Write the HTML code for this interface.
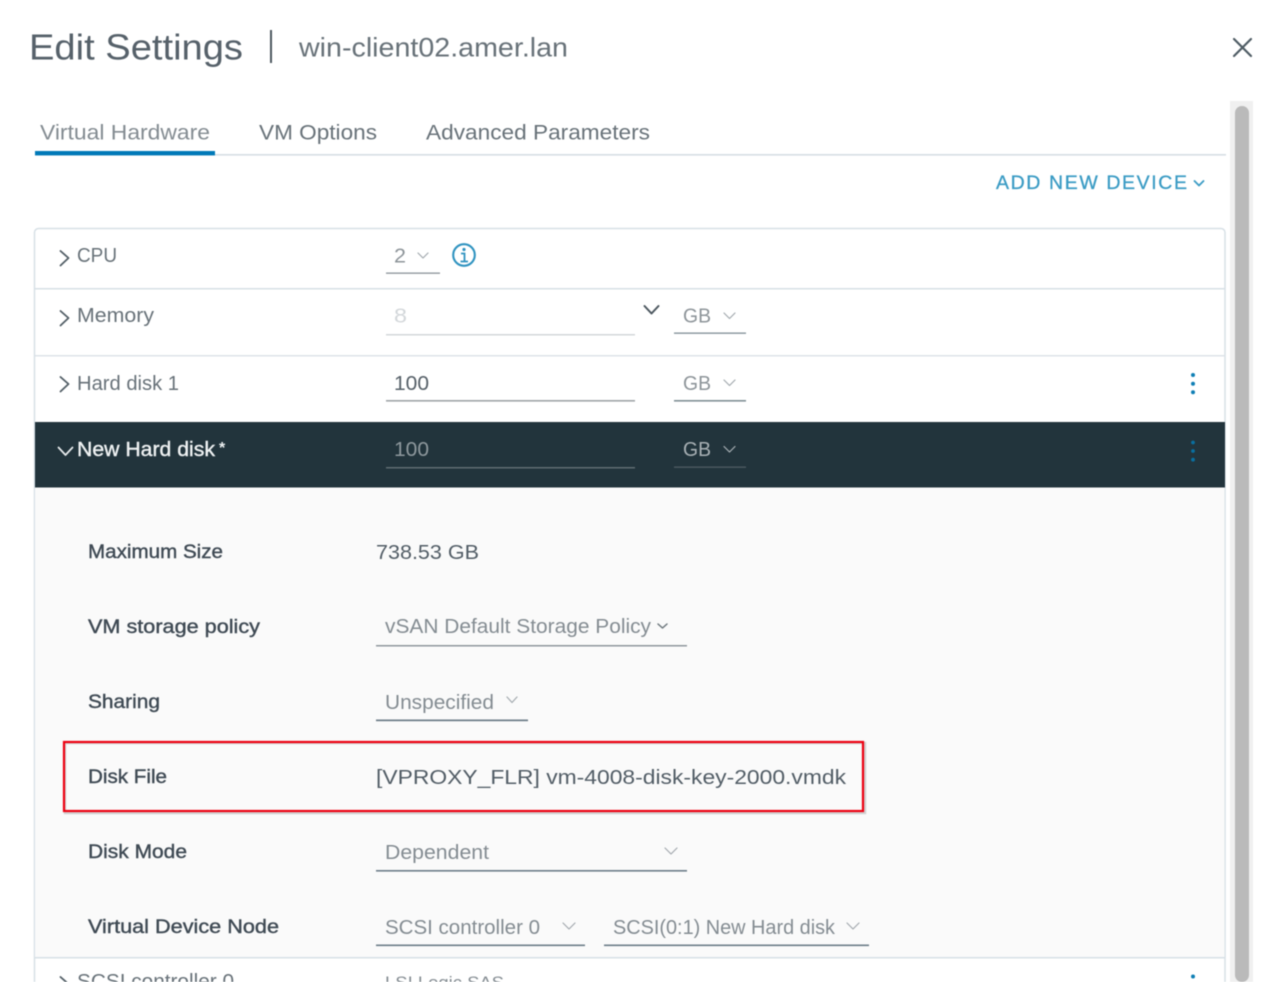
<!DOCTYPE html>
<html>
<head>
<meta charset="utf-8">
<title>Edit Settings</title>
<style>
html,body{margin:0;padding:0;background:#fff;width:1266px;height:982px;overflow:hidden}
svg{display:block;filter:blur(.45px)}
text{font-family:"Liberation Sans",sans-serif;font-size:20px}
.l{fill:#525d66}
.m{fill:#687279}
.g{fill:#848c92}
.b{fill:#3f4a54;font-size:19.5px;stroke:#3f4a54;stroke-width:.4px}
.c{fill:none;stroke-linecap:round;stroke-linejoin:round}
</style>
</head>
<body>
<svg width="1266" height="982" viewBox="0 0 1266 982" xmlns="http://www.w3.org/2000/svg">
<rect width="1266" height="982" fill="#fff"/>

<!-- header -->
<text x="29" y="59.500" style="font-size:36px" fill="#56616a" textLength="214" lengthAdjust="spacingAndGlyphs">Edit Settings</text>
<rect x="270" y="30" width="2" height="33" fill="#4d5860"/>
<text x="299" y="56.500" style="font-size:27px" fill="#687279" textLength="269" lengthAdjust="spacingAndGlyphs">win-client02.amer.lan</text>
<path class="c" d="M1234 39L1251 56M1251 39L1234 56" stroke="#4f5c64" stroke-width="2.200"/>

<!-- scrollbar -->
<rect x="1230" y="101" width="23" height="881" fill="#f0f0f0"/>
<rect x="1235" y="106" width="14" height="876" rx="7" fill="#bababa"/>

<!-- tabs -->
<text x="40" y="139.500" class="g" style="font-size:21.500px" textLength="170" lengthAdjust="spacingAndGlyphs">Virtual Hardware</text>
<text x="259" y="139.500" class="m" style="font-size:21.500px" textLength="118" lengthAdjust="spacingAndGlyphs">VM Options</text>
<text x="426" y="139.500" class="m" style="font-size:21.500px" textLength="224" lengthAdjust="spacingAndGlyphs">Advanced Parameters</text>
<rect x="35" y="154" width="1191" height="1.600" fill="#d6dee3"/>
<rect x="35" y="151" width="180" height="4.400" fill="#0079b8"/>

<text x="996" y="189" style="font-size:19.500px;stroke:#3a9bc4;stroke-width:.3px" fill="#3a9bc4" textLength="191" lengthAdjust="spacing">ADD NEW DEVICE</text>
<path class="c" d="M1194.500 181L1199 185.500L1203.500 181" stroke="#3a9bc4" stroke-width="1.800"/>

<!-- card -->
<path d="M34.500 982V232.500a4 4 0 0 1 4-4H1221a4 4 0 0 1 4 4V982" fill="#fff" stroke="#d7e0e6" stroke-width="1.500"/>
<rect x="35" y="288" width="1190" height="1.500" fill="#d7e0e6"/>
<rect x="35" y="355" width="1190" height="1.500" fill="#dde3e8"/>
<rect x="35" y="488" width="1189.500" height="469" fill="#fafafa"/>
<rect x="35" y="422" width="1190" height="65.500" fill="#22343c"/>
<rect x="35" y="957" width="1190" height="1.500" fill="#d7e0e6"/>

<!-- CPU -->
<path class="c" d="M60.500 251L68.500 258L60.500 265.500" stroke="#525e66" stroke-width="1.800"/>
<text x="77" y="262" class="m" textLength="40" lengthAdjust="spacingAndGlyphs">CPU</text>
<text x="394" y="262.500" fill="#8d9499" textLength="12" lengthAdjust="spacingAndGlyphs">2</text>
<path class="c" d="M418 253L423 258L428 253" stroke="#a3aaaf" stroke-width="1.200"/>
<rect x="386" y="272.500" width="54" height="1.300" fill="#8b9399"/>
<circle cx="464" cy="255" r="10.800" fill="none" stroke="#2f93c0" stroke-width="2.100"/>
<circle cx="464" cy="249.500" r="1.600" fill="#2f93c0"/>
<path d="M461 253.500H464.500V261M460.500 261.500H468" fill="none" stroke="#2f93c0" stroke-width="1.800"/>

<!-- Memory -->
<path class="c" d="M60.500 311L68.500 318L60.500 325.500" stroke="#525e66" stroke-width="1.800"/>
<text x="77" y="322" class="m" textLength="77" lengthAdjust="spacingAndGlyphs">Memory</text>
<text x="394" y="322.500" fill="#d3d7da" textLength="13" lengthAdjust="spacingAndGlyphs">8</text>
<rect x="386" y="334" width="249" height="1.500" fill="#d3d7da"/>
<path class="c" d="M644.500 306L651.500 313.500L658.500 306" stroke="#4c575f" stroke-width="2"/>
<text x="683" y="322.500" fill="#8d9499" textLength="28" lengthAdjust="spacingAndGlyphs">GB</text>
<path class="c" d="M724 313L729.500 318.500L735 313" stroke="#a3aaaf" stroke-width="1.200"/>
<rect x="674" y="332.500" width="72" height="1.300" fill="#7f8e95"/>

<!-- Hard disk 1 -->
<path class="c" d="M60.500 377L68.500 384L60.500 391.500" stroke="#525e66" stroke-width="1.800"/>
<text x="77" y="390" class="m" textLength="102" lengthAdjust="spacingAndGlyphs">Hard disk 1</text>
<text x="394" y="390" fill="#566068" textLength="35" lengthAdjust="spacingAndGlyphs">100</text>
<rect x="386" y="400" width="249" height="1.600" fill="#9ea3a7"/>
<text x="683" y="390" fill="#8d9499" textLength="28" lengthAdjust="spacingAndGlyphs">GB</text>
<path class="c" d="M724 380L729.500 385.500L735 380" stroke="#a3aaaf" stroke-width="1.200"/>
<rect x="674" y="400" width="72" height="1.600" fill="#7f8e95"/>
<circle cx="1193" cy="375" r="2" fill="#0f7fb5"/>
<circle cx="1193" cy="383.700" r="2" fill="#0f7fb5"/>
<circle cx="1193" cy="392.300" r="2" fill="#0f7fb5"/>

<!-- New Hard disk -->
<path class="c" d="M58.500 447.500L65.500 455L72.500 447.500" stroke="#e6eaec" stroke-width="1.800"/>
<text x="77" y="456" fill="#eef1f2" style="font-size:20px;stroke:#eef1f2;stroke-width:.4px" textLength="138" lengthAdjust="spacingAndGlyphs">New Hard disk</text>
<text x="219" y="453" fill="#eef1f2" style="font-size:16px;font-weight:bold">*</text>
<text x="394" y="456" fill="#8e989d" textLength="35" lengthAdjust="spacingAndGlyphs">100</text>
<rect x="386" y="467" width="249" height="1.500" fill="#5f6c72"/>
<text x="683" y="456" fill="#a9b1b5" textLength="28" lengthAdjust="spacingAndGlyphs">GB</text>
<path class="c" d="M724 446.500L729.500 452L735 446.500" stroke="#aab2b6" stroke-width="1.200"/>
<rect x="674" y="466.500" width="72" height="1.300" fill="#4f5c63"/>
<circle cx="1193" cy="442.500" r="1.900" fill="#0a6f9f"/>
<circle cx="1193" cy="451" r="1.900" fill="#0a6f9f"/>
<circle cx="1193" cy="459.700" r="1.900" fill="#0a6f9f"/>

<!-- details -->
<text x="88" y="558" class="b" textLength="135" lengthAdjust="spacingAndGlyphs">Maximum Size</text>
<text x="376" y="559" class="l" textLength="103" lengthAdjust="spacingAndGlyphs">738.53 GB</text>

<text x="88" y="633" class="b" textLength="172" lengthAdjust="spacingAndGlyphs">VM storage policy</text>
<text x="385" y="633" class="g" textLength="266" lengthAdjust="spacingAndGlyphs">vSAN Default Storage Policy</text>
<path class="c" d="M658 624L662.500 628L667 624" stroke="#6d777d" stroke-width="1.500"/>
<rect x="376" y="645" width="311" height="1.500" fill="#8f979d"/>

<text x="88" y="708" class="b" textLength="72" lengthAdjust="spacingAndGlyphs">Sharing</text>
<text x="385" y="709" class="g" textLength="109" lengthAdjust="spacingAndGlyphs">Unspecified</text>
<path class="c" d="M507 697L512 702.500L517 697" stroke="#a3aaaf" stroke-width="1.200"/>
<rect x="376" y="719.500" width="152" height="1.700" fill="#6c7c88"/>

<!-- highlight -->
<rect x="65" y="743" width="800" height="70" fill="none" stroke="#000" stroke-opacity=".16" stroke-width="2.500"/>
<rect x="64" y="742" width="799" height="69" fill="none" stroke="#ee0011" stroke-width="2.200"/>
<text x="88" y="783" class="b" textLength="79" lengthAdjust="spacingAndGlyphs">Disk File</text>
<text x="376" y="784" class="l" textLength="470" lengthAdjust="spacingAndGlyphs">[VPROXY_FLR] vm-4008-disk-key-2000.vmdk</text>

<text x="88" y="858" class="b" textLength="99" lengthAdjust="spacingAndGlyphs">Disk Mode</text>
<text x="385" y="859" class="g" textLength="104" lengthAdjust="spacingAndGlyphs">Dependent</text>
<path class="c" d="M665 848L671 854L677 848" stroke="#a3aaaf" stroke-width="1.200"/>
<rect x="376" y="870" width="311" height="1.600" fill="#6c7c88"/>

<text x="88" y="933" class="b" textLength="191" lengthAdjust="spacingAndGlyphs">Virtual Device Node</text>
<text x="385" y="934" class="g" textLength="155" lengthAdjust="spacingAndGlyphs">SCSI controller 0</text>
<path class="c" d="M563 923L569 929L575 923" stroke="#a3aaaf" stroke-width="1.200"/>
<rect x="376" y="944.500" width="209" height="1.600" fill="#6c7c88"/>
<text x="613" y="934" class="g" textLength="222" lengthAdjust="spacingAndGlyphs">SCSI(0:1) New Hard disk</text>
<path class="c" d="M847 923L853 929L859 923" stroke="#a3aaaf" stroke-width="1.200"/>
<rect x="604" y="944.500" width="265" height="1.600" fill="#6c7c88"/>

<!-- SCSI controller row, cut off by the viewport -->
<path class="c" d="M60.500 977L68.500 984L60.500 991" stroke="#525e66" stroke-width="1.800"/>
<text x="77" y="988" class="m" textLength="157" lengthAdjust="spacingAndGlyphs">SCSI controller 0</text>
<text x="385" y="988" class="g" style="font-size:17px" textLength="119" lengthAdjust="spacingAndGlyphs">LSI Logic SAS</text>
<circle cx="1193" cy="976.500" r="2" fill="#0f7fb5"/>
</svg>
</body>
</html>
